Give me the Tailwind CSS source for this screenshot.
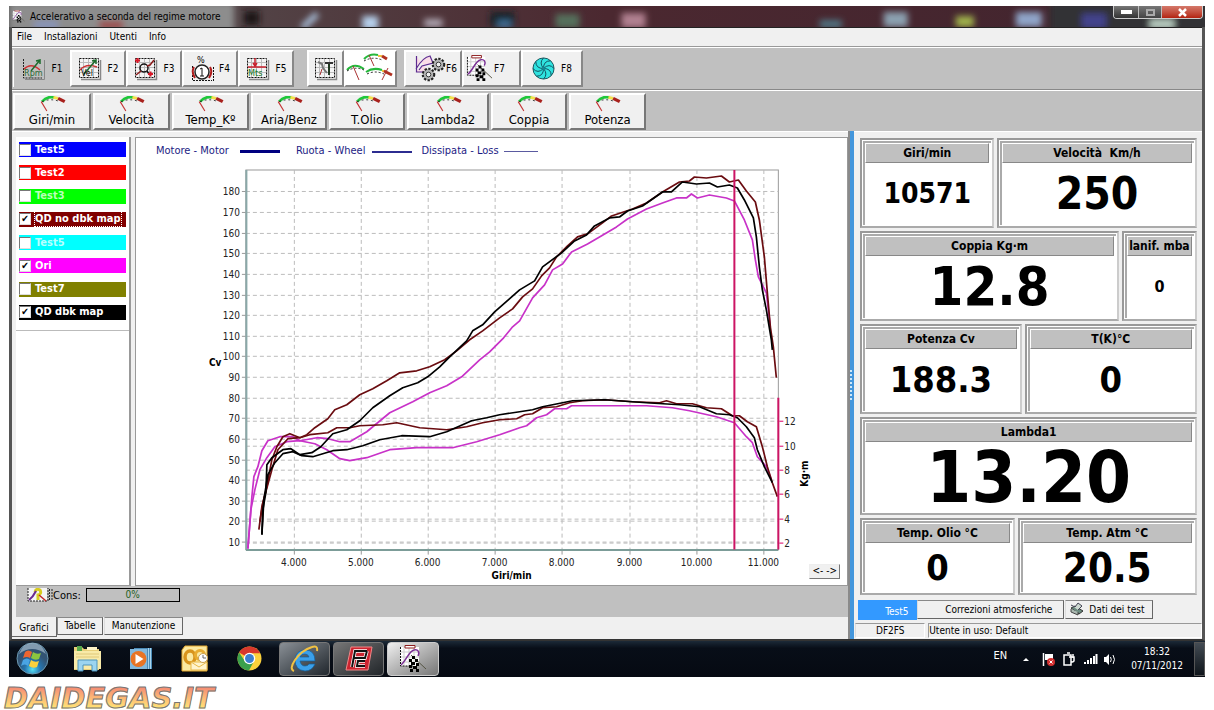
<!DOCTYPE html>
<html lang="it">
<head>
    <meta charset="UTF-8">
    <meta name="viewport" content="width=device-width, initial-scale=1.0">
    <title>Accelerativo a seconda del regime motore</title>
    <script src="https://cdn.jsdelivr.net/npm/@tailwindcss/browser@4"></script>
</head>
<body class="bg-white text-black text-[11px] font-['DejaVu_Sans_Condensed','DejaVu_Sans',sans-serif]">

    <!-- Simboli condivisi -->
    <svg class="hidden" aria-hidden="true">
        <symbol id="gauge" viewBox="0 0 28 17">
            <path d="M3 6 Q8 0 16 1.500" fill="none" stroke="#1fc83a" stroke-width="3"/>
            <path d="M15 1.500 L20 2.500" stroke="#f4e04a" stroke-width="3"/>
            <path d="M20 2.500 L27 6" stroke="#a8201c" stroke-width="3.500"/>
            <path d="M3 6 Q12 2 22 6" fill="none" stroke="#222" stroke-width="1" stroke-dasharray="2 3"/>
            <path d="M2 6 L8 16" stroke="#c43434" stroke-width="1.200"/>
        </symbol>
        <symbol id="grid" viewBox="0 0 24 24">
            <rect x="1" y="1" width="20" height="20" fill="#f4f4f4"/>
            <path d="M5.500 1V21M10.500 1V21M15.500 1V21M1 5.500H21M1 10.500H21M1 15.500H21" stroke="#bbb" stroke-width="1"/>
            <rect x="1.500" y="1.500" width="19" height="19" fill="none" stroke="#111" stroke-dasharray="2 1"/>
            <path d="M22.500 3V22.500H3" fill="none" stroke="#888" stroke-width="1.500"/>
        </symbol>
        <symbol id="chequer" viewBox="0 0 28 28">
            <rect x="1" y="2" width="19" height="19" fill="#fff"/>
            <path d="M5 2V21M10 2V21M15 2V21M1 7H20M1 12H20M1 17H20" stroke="#ccc"/>
            <path d="M1.500 2V21H14" fill="none" stroke="#111" stroke-dasharray="2 1"/>
            <path d="M6 .5H16V3H6Z" fill="#fff" stroke="#8c1c1c"/>
            <path d="M2 20C7 16 10 6 15 5C19 4 21 7 19 11" fill="none" stroke="#7a2f95" stroke-width="1.500"/>
            <path d="M12 10L27 24" stroke="#554" stroke-width="1"/>
            <path d="M13 11h3v3h-3zM10 14h3v3h-3zM16 14h3v3h-3zM12 17h4v3h-4zM17 18h3v3h-3zM10 20h3v3h-3zM14 21h4v3h-4zM11 24h3v3h-3zM17 24h3v3h-3z" fill="#000"/>
        </symbol>
        <symbol id="gear" viewBox="0 0 16 16">
            <circle cx="8" cy="8" r="6" fill="#aaa" stroke="#222" stroke-width="2.500" stroke-dasharray="2.400 1.500"/>
            <circle cx="8" cy="8" r="5" fill="#b4b4b4"/>
            <circle cx="8" cy="8" r="2.500" fill="#eee" stroke="#333"/>
        </symbol>
    </svg>

    <div class="mx-[9px] mt-[6px]">

        <!-- Barra del titolo -->
        <header class="relative flex h-[21px] items-center overflow-hidden bg-linear-to-r from-[#555] via-[#4b2830] to-[#41242e]">
            <svg class="absolute inset-0 h-full w-full" viewBox="0 0 1195 21" preserveAspectRatio="none" aria-hidden="true">
                <defs><filter id="soft"><feGaussianBlur stdDeviation="3"/></filter></defs>
                <g filter="url(#soft)">
                    <rect x="0" y="-4" width="225" height="30" fill="#8d8d8d"/>
                    <rect x="25" y="15" width="24" height="8" fill="#8894ba"/>
                    <rect x="90" y="15" width="24" height="8" fill="#9c4444"/>
                    <rect x="235" y="5" width="15" height="14" fill="#1c1218"/>
                    <path d="M293 22L308 8" stroke="#a8bfda" stroke-width="6"/>
                    <rect x="353" y="10" width="16" height="14" fill="#b6d0ec"/>
                    <rect x="415" y="13" width="18" height="8" fill="#b0a8b4"/>
                    <rect x="481" y="6" width="24" height="15" fill="#152228"/>
                    <rect x="488" y="14" width="14" height="8" fill="#3c6c92"/>
                    <rect x="546" y="8" width="24" height="14" fill="#54705c"/>
                    <rect x="612" y="7" width="24" height="15" fill="#b08090"/>
                    <rect x="810" y="14" width="22" height="8" fill="#507684"/>
                    <rect x="874" y="6" width="24" height="15" fill="#8ba0b0"/>
                    <rect x="946" y="10" width="18" height="11" fill="#a0b34c"/>
                    <rect x="1006" y="6" width="26" height="15" fill="#8fa4c8"/>
                    <rect x="1040" y="-4" width="160" height="30" fill="#333036"/>
                    <rect x="1072" y="8" width="24" height="14" fill="#42428c"/>
                    <rect x="1140" y="14" width="24" height="8" fill="#c0d4c8"/>
                </g>
            </svg>
            <svg class="relative ml-[3px] size-[13px]" aria-hidden="true"><use href="#chequer"/></svg>
            <h1 class="relative ml-[5px] text-[10px] leading-4">Accelerativo a seconda del regime motore</h1>
            <div class="relative mr-[2px] ml-auto flex h-[13px] self-start overflow-hidden rounded-b border border-t-0 border-[#ccc]">
                <button aria-label="Riduci" class="flex w-[25px] items-center justify-center border-r border-[#bbb] bg-linear-to-b from-[#777] to-[#333]"><span class="h-[4px] w-[11px] bg-white"></span></button>
                <button aria-label="Ingrandisci" class="flex w-[23px] items-center justify-center border-r border-[#bbb] bg-linear-to-b from-[#777] to-[#444]"><span class="h-[7px] w-[9px] border-2 border-[#aaa]"></span></button>
                <button aria-label="Chiudi" class="flex w-[40px] items-center justify-center bg-linear-to-b from-[#d4786a] to-[#b3200d]">
                    <svg class="size-[9px]" viewBox="0 0 9 9"><path d="M1 1L8 8M8 1L1 8" stroke="#fff" stroke-width="2.500"/></svg>
                </button>
            </div>
        </header>

        <div class="border-x-[3px] border-b-2 border-x-[#555] border-b-[#333] bg-[#f0f0f0]">
            <!-- Menu -->
            <nav class="flex h-[20px] items-center gap-[12px] border-t border-b border-t-[#222] border-b-[#999] pb-[2px] pl-[5px] text-[10px]">
                <a href="#">File</a>
                <a href="#">Installazioni</a>
                <a href="#">Utenti</a>
                <a href="#">Info</a>
            </nav>

            <!-- Strumenti -->
            <div class="flex h-[43px] items-center border-t border-b border-t-white border-b-[#888] bg-[#c0c0c0] pl-px">
                <button class="flex h-[37px] w-[57px] items-center justify-center gap-[6px] border-l border-white text-[10px]">
                    <svg class="size-[24px]" viewBox="0 0 24 24"><path d="M1.500 2V21H20" fill="none" stroke="#222" stroke-dasharray="2 1"/><path d="M2 12Q9 5 18 13" fill="none" stroke="#c33" stroke-width="1.500"/><path d="M9 14L18 3M14 4L18 3V7" fill="none" stroke="#1c6c2c" stroke-width="1.500"/><text x="2" y="19" font-size="9" fill="#2a6a35">Rpm</text><path d="M22.500 3V22.500H3" fill="none" stroke="#888"/></svg>F1
                </button>
                <button class="flex h-[37px] w-[56px] items-center justify-center gap-[6px] border-2 border-t-white border-r-[#888] border-b-[#888] border-l-white bg-[#f0f0f0] text-[10px]">
                    <svg class="size-[24px]" viewBox="0 0 24 24"><use href="#grid"/><path d="M2 13Q8 6 19 10" fill="none" stroke="#c33" stroke-width="1.500"/><path d="M6 17L18 3M14 4L18 3V7" fill="none" stroke="#1c6c2c" stroke-width="1.500"/><text x="3" y="19" font-size="9">Vel</text></svg>F2
                </button>
                <button class="flex h-[37px] w-[56px] items-center justify-center gap-[6px] border-2 border-t-white border-r-[#888] border-b-[#888] border-l-white bg-[#f0f0f0] text-[10px]">
                    <svg class="size-[24px]" viewBox="0 0 24 24"><use href="#grid"/><circle cx="10" cy="11" r="4" fill="none" stroke="#111" stroke-width="1.500"/><path d="M13 14L15 17" stroke="#111" stroke-width="1.500"/><path d="M2 18L7 14M13 9L16 8L20 3" fill="none" stroke="#8c1c1c" stroke-width="1.500"/><path d="M1 3.500H6M3.500 1V6M14 17H19M16.500 14.500V19.500" stroke="#d81828" stroke-width="2"/></svg>F3
                </button>
                <button class="flex h-[37px] w-[56px] items-center justify-center gap-[4px] border-2 border-t-white border-r-[#888] border-b-[#888] border-l-white bg-[#f0f0f0] text-[10px]">
                    <svg class="h-[29px] w-[25px]" viewBox="0 0 25 29"><text x="7" y="9" font-size="9">%</text><path d="M2.500 12V26.500H22M23.500 13V27" fill="none" stroke="#111" stroke-dasharray="2 1"/><circle cx="12" cy="18" r="7" fill="#fff" stroke="#222" stroke-width="1.500"/><path d="M4 13Q1 18 5 24M20 13Q23 18 19 24" fill="none" stroke="#b01c1c" stroke-width="2"/><path d="M12 14V22M10 15L12 14M10 22H14" fill="none" stroke="#111"/></svg>F4
                </button>
                <button class="flex h-[37px] w-[56px] items-center justify-center gap-[6px] border-2 border-t-white border-r-[#888] border-b-[#888] border-l-white bg-[#f0f0f0] text-[10px]">
                    <svg class="size-[24px]" viewBox="0 0 24 24"><use href="#grid"/><path d="M2 10H20M9 1V9M7 6L9 9L11 6" fill="none" stroke="#c8202c" stroke-width="1.500"/><text x="2" y="19" font-size="9" fill="#157a28">Mts</text></svg>F5
                </button>
                <button aria-label="Impostazioni" class="ml-[13px] flex h-[37px] w-[37px] items-center justify-center border-2 border-t-white border-r-[#888] border-b-[#888] border-l-white bg-[#f0f0f0]">
                    <svg class="size-[24px]" viewBox="0 0 24 24"><use href="#grid"/><path d="M15 6V18" stroke="#223a22" stroke-width="2"/><path d="M11 5H19V7H11Z" fill="#333"/><path d="M4 5L8 7L9 11L13 16" fill="none" stroke="#777" stroke-width="2"/><path d="M8 12L6 18" stroke="#a33"/></svg>
                </button>
                <button aria-label="Strumenti" class="h-[37px] w-[53px] border-2 border-t-white border-r-[#888] border-b-[#888] border-l-white bg-white">
                    <svg class="h-[33px] w-[49px]" viewBox="0 0 49 33" aria-hidden="true">
                        <g fill="none" stroke-width="2"><path d="M18 7Q24 1 32 3M1 18Q8 10 18 17M20 20Q27 15 36 18" stroke="#26b83c"/><path d="M32 4H36M36 19H39" stroke="#f0c040"/><path d="M36 4L41 7M38 19L46 23" stroke="#b03020" stroke-width="3"/><path d="M18 9Q27 4 36 8M1 19Q9 14 18 18M21 22Q29 18 38 22" stroke="#222" stroke-width="1" stroke-dasharray="2 2"/><path d="M23 3L28 14M7 14L13 28M42 16L36 28" stroke="#a33" stroke-width="1"/></g>
                    </svg>
                </button>
                <button class="ml-[7px] flex h-[37px] w-[58px] items-center justify-end border-2 border-t-white border-r-[#888] border-b-[#888] border-l-white bg-[#f0f0f0] pr-[3px] text-[10px]">
                    <svg class="h-[28px] w-[31px]" viewBox="0 0 31 28"><path d="M1.500 1V17H14M1 14Q8 2 15 1L18 8L7 11L4 15" fill="#fbdde8" stroke="#5c2c90" stroke-width="1.200"/><use href="#gear" x="16" y="2" width="15" height="15"/><use href="#gear" x="6" y="12" width="15" height="15"/></svg>F6
                </button>
                <button class="flex h-[37px] w-[59px] items-center gap-px border-2 border-t-white border-r-[#888] border-b-[#888] border-l-white bg-[#f0f0f0] pl-[2px] text-[10px]">
                    <svg class="size-[27px]" aria-hidden="true"><use href="#chequer"/></svg>F7
                </button>
                <button class="flex h-[37px] w-[62px] items-center justify-center gap-[6px] border-2 border-t-white border-r-[#888] border-b-[#888] border-l-white bg-[#f0f0f0] text-[10px]">
                    <svg class="size-[23px]" viewBox="0 0 24 24"><circle cx="12" cy="12" r="11" fill="#2fe3e0" stroke="#145058"/><g fill="none" stroke="#124c5c" stroke-width="1"><path d="M12 12Q7 6 12 1M12 12Q12 4 19 4M12 12Q18 6 23 12M12 12Q20 12 20 19M12 12Q17 18 12 23M12 12Q12 20 5 20M12 12Q6 18 1 12M12 12Q4 12 4 5"/></g><circle cx="12" cy="12" r="1.500" fill="#138a98"/></svg>F8
                </button>
            </div>

            <!-- Canali -->
            <div id="canali" class="flex h-[41px] items-center gap-[2px] border-t border-white bg-[#c0c0c0] pl-px text-[13px]"></div>

            <main class="grid grid-cols-[837fr_6px_348fr]">
                <section class="flex flex-col border-t border-white">
                    <div class="ml-[4px] grid grow grid-cols-[115px_1fr] gap-[4px] pt-[5px]">
                        <!-- Elenco prove -->
                        <div class="border-r-2 border-b border-r-[#999] border-b-[#999] bg-white">
                            <div id="prove" class="flex h-[194px] flex-col justify-between border-b border-[#bbb] px-[3px] pt-[5px] pb-[10px]"></div>
                        </div>
                        <!-- Grafico -->
                        <div class="relative border border-[#999] bg-white">
                            <div class="flex h-[27px] items-center pl-[20px] text-[11px] text-[#1c1c84]">
                                <span>Motore - Motor</span><span class="mr-[16px] ml-[11px] h-[3px] w-[40px] bg-[#000080]"></span>
                                <span>Ruota - Wheel</span><span class="mr-[9px] ml-[7px] h-[2px] w-[40px] bg-[#2c2c90]"></span>
                                <span>Dissipata - Loss</span><span class="ml-[5px] h-px w-[34px] bg-[#5a5aa0]"></span>
                            </div>
                            <svg id="grafico" class="block w-full" viewBox="136 165 712 420" font-size="10">
                                <rect x="246" y="170" width="533" height="380" fill="#fff" stroke="#999"/>
                                <g id="griglia" stroke="#bcbcbc" stroke-dasharray="4 3"></g>
                                <g id="assi" fill="#222"></g>
                                <path d="M246.500 170V550.500" stroke="#8aa8a8" stroke-width="2"/>
                                <path d="M246 550.500H779" stroke="#7c9c98" stroke-width="2"/>
                                <g fill="none" stroke-width="1.700" stroke-linejoin="round">
                                    <g stroke="#c832c8">
                                        <polyline points="248,549 252,497 254,477 258,467 262,451 268,441 280,437 293,437 300,441 317,438 328,439 340,442 350,442 367,432 390,413 413,402 430,393 447,386 462,377 480,360 490,352 504,338 513,327 520,321 533,298 545,285 553,270 563,264 572,252 588,244 600,237 617,227 628,219 647,209 663,203 677,198 687,198 692,194 698,198 710,195 727,198 735,201 745,220 753,240 756,260 759,277 767,293 771,327"/>
                                        <polyline points="248,549 251,510 255,490 260,470 267,458 275,447 287,442 300,441 315,444 327,450 340,459 350,461 367,458 390,450 417,448 453,448 477,442 500,435 520,428 527,426 537,418 547,415 555,409 567,409 572,406 647,406 673,408 690,411 717,417 735,423 747,437 753,443 758,457 767,467 772,480"/>
                                    </g>
                                    <g stroke="#6a0c10">
                                        <polyline points="259,530 262,507 267,487 272,460 277,447 283,437 290,434 300,438 307,435 315,428 328,419 335,410 347,405 360,395 373,389 387,381 400,373 417,371 430,367 445,360 457,351 470,340 483,331 500,318 513,309 523,297 533,289 542,276 550,268 557,257 568,246 578,237 588,234 603,223 612,216 618,214 633,209 647,203 663,192 680,182 690,181 695,177 707,178 722,176 730,182 739,180 747,191 756,202 760,220 765,257 768,293 771,327 774,347 777,378"/>
                                        <polyline points="260,522 263,503 272,470 278,450 288,439 300,438 310,435 328,433 337,428 350,428 360,426 383,425 397,423 420,428 447,430 467,427 483,423 500,420 517,419 525,415 533,414 543,408 557,407 570,403 583,401 605,400 633,402 660,403 667,401 677,404 693,404 707,408 722,409 733,416 740,416 748,422 757,427 763,447 768,467 773,483 778,497"/>
                                    </g>
                                    <g stroke="#000">
                                        <polyline points="262,535 263,510 266,493 267,465 272,458 283,450 291,449 300,455 312,453 321,447 333,434 347,430 360,421 373,408 390,396 403,388 418,383 428,377 440,367 450,357 467,341 473,331 483,325 495,312 520,290 535,281 543,267 562,253 575,241 587,235 595,226 610,218 620,217 628,211 643,206 663,192 672,192 683,182 697,184 710,183 718,187 730,185 738,188 745,200 754,218 757,237 760,267 763,290 767,310 772,340 773,350"/>
                                        <polyline points="262,535 264,500 268,475 275,463 283,454 293,452 302,456 313,457 333,451 347,450 363,446 380,440 402,436 430,437 447,432 472,421 487,418 500,415 520,412 533,410 543,407 573,401 605,400 647,403 680,405 700,407 717,414 730,415 738,418 747,427 755,438 758,450 765,467 773,483"/>
                                    </g>
                                </g>
                                <path d="M735 170V550M779 398V550" stroke="#cc1464" stroke-width="2"/>
                                <g font-weight="bold">
                                    <text x="209" y="366">Cv</text>
                                    <text x="512" y="579" text-anchor="middle">Giri/min</text>
                                    <text transform="translate(809 474) rotate(-90)" text-anchor="middle">Kg·m</text>
                                </g>
                            </svg>
                            <button class="absolute right-[7px] bottom-[6px] h-[15px] w-[31px] border border-t-[#eee] border-r-[#777] border-b-[#777] border-l-[#eee] bg-[#f0f0f0] text-[10px] leading-[12px] whitespace-nowrap">&lt;- -&gt;</button>
                        </div>
                    </div>
                    <div class="ml-[4px] flex h-[31px] items-start bg-[#c0c0c0] pt-[2px] pl-[10px] text-[11px]">
                        <svg class="h-[14px] w-[27px]" viewBox="0 0 27 14" aria-hidden="true"><rect x="2" width="19" height="13" fill="#f4f4f4"/><path d="M2 0V13H22V0M23.500 1V13M26 1V13" fill="none" stroke="#222" stroke-dasharray="2 1"/><path d="M9 4Q10 0 14 2Q16 6 12 7V12" fill="none" stroke="#d8cc20" stroke-width="3"/><path d="M3 12Q7 9 10 3" fill="none" stroke="#6a2890" stroke-width="2"/><path d="M13 7L20 13" stroke="#c02828" stroke-width="1.500"/></svg>
                        <span>Cons:</span>
                        <div role="progressbar" aria-valuenow="0" class="ml-[5px] h-[14px] w-[94px] border border-black text-center text-[10px] leading-3 text-[#226022]">0%</div>
                    </div>
                    <div class="flex items-start pb-[2px] text-[10px]">
                        <button class="h-[20px] w-[45px] border-r border-b border-[#666] pt-[3px]">Grafici</button>
                        <button class="h-[18px] w-[46px] border border-t-[#888] border-r-[#666] border-b-[#666] border-l-[#888]">Tabelle</button>
                        <button class="ml-px h-[18px] w-[79px] border border-t-[#888] border-r-[#666] border-b-[#666] border-l-[#ddd]">Manutenzione</button>
                    </div>
                </section>

                <!-- Divisore -->
                <div class="flex items-center border-l-2 border-[#8a8a8a] bg-[#4396dc]">
                    <span class="h-[30px] w-full border-l-2 border-dotted border-[#d0e8f8]"></span>
                </div>

                <!-- Valori istantanei -->
                <section class="flex flex-col border-t border-white pl-px">
                    <div id="valori" class="mx-[5px] mt-[6px] grid grow grid-rows-[90fr_90fr_90fr_98fr_76fr] gap-[3px]"></div>
                    <div class="mt-[5px] ml-[3px] flex h-[20px] items-start text-[10px]">
                        <button class="h-[20px] w-[59px] bg-[#3399ff] pt-[4px] pl-[18px] text-white">Test5</button>
                        <button class="h-[19px] w-[147px] border border-t-[#888] border-r-[#666] border-b-[#666] border-l-[#ddd] pl-[16px]">Correzioni atmosferiche</button>
                        <button class="ml-px flex h-[19px] w-[88px] items-center gap-[5px] border border-t-[#888] border-r-[#666] border-b-[#666] border-l-[#ddd] pl-[4px] whitespace-nowrap">
                            <svg class="size-[14px] shrink-0" viewBox="0 0 14 14"><path d="M1 6L5 4L13 9L9 12Z" fill="#6c8c80" stroke="#333"/><path d="M1 3L5 5L8 1L12 4L8 8" fill="#ccd8d0" stroke="#445"/><path d="M1 7V10L8 13V10" fill="#aab8b0" stroke="#444"/></svg>Dati dei test
                        </button>
                    </div>
                    <div class="mt-[3px] mb-px flex h-[15px] gap-[3px] text-[10px] leading-[14px]">
                        <div class="w-[70px] border border-t-[#999] border-r-white border-b-white border-l-[#ddd] text-center">DF2FS</div>
                        <div class="grow border border-t-[#999] border-r-white border-b-white border-l-[#999]">Utente in uso: Default</div>
                    </div>
                </section>
            </main>
        </div>

        <!-- Barra delle applicazioni -->
        <footer class="flex h-[36px] items-center bg-linear-to-b from-[#1c2a38] via-[#080e18] via-20% to-[#060a12] text-[10px] text-white">
            <button aria-label="Start" class="ml-[7px]">
                <svg class="size-[33px]" viewBox="0 0 33 33"><defs><radialGradient id="orb" cy=".85"><stop offset="0" stop-color="#58e0f4"/><stop offset=".5" stop-color="#2575b0"/><stop offset="1" stop-color="#335474"/></radialGradient></defs><circle cx="16.500" cy="16.500" r="15.500" fill="url(#orb)" stroke="#6c98b0"/><path d="M3 12Q16 2 30 12Q26 1 16 1Q7 1 3 12" fill="#b8ccd8" opacity=".6"/><path d="M9 10Q12 7 16 10L14 16Q11 14 7 16Z" fill="#ee6530"/><path d="M17 10Q21 13 25 11L23 17Q19 19 15 16Z" fill="#8cc63e"/><path d="M7 18Q11 15 14 18L12 24Q9 21 5 24Z" fill="#4aa4e4"/><path d="M15 18Q19 21 23 19L21 25Q17 27 13 24Z" fill="#fcd03c"/></svg>
            </button>
            <button aria-label="Esplora risorse" class="ml-[24px]">
                <svg class="h-[27px] w-[29px]" viewBox="0 0 29 27"><path d="M1 2H9L11 4H26V25H1Z" fill="#e8cf78"/><path d="M4 1H9V6H4Z" fill="#57a84c"/><path d="M14 2H24V5H14Z" fill="#fff4c8"/><path d="M1 6H28V24H1Z" fill="#f8eaa8"/><path d="M3 9H26M3 12H26" stroke="#e0c878"/><path d="M5 26V15H24V26H19V20H10V26Z" fill="#9bd4f0" stroke="#4c94bc"/></svg>
            </button>
            <button aria-label="Media Player" class="ml-[27px]">
                <svg class="h-[23px] w-[24px]" viewBox="0 0 24 23"><path d="M5 1H23V22H5Z" fill="#4c8cb8"/><path d="M19.500 1V22M21.500 1V22" stroke="#a8d4ec"/><path d="M1 2H18V22H1Z" fill="#82b8dc"/><circle cx="9.500" cy="12" r="8" fill="#e87424"/><path d="M6.500 7L14.500 12L6.500 17Z" fill="#fff"/></svg>
            </button>
            <button aria-label="Outlook" class="ml-[28px]">
                <svg class="size-[27px]" viewBox="0 0 27 27"><path d="M4 1H26V26H1V5Z" fill="#fbe9a0" stroke="#e4a82c"/><ellipse cx="9" cy="12" rx="5" ry="6" fill="none" stroke="#d8941c" stroke-width="3.500"/><circle cx="19" cy="10" r="4.500" fill="none" stroke="#e8ac30" stroke-width="3"/><path d="M10 17H26V25H10Z" fill="#fff4cc" stroke="#e8b848"/><path d="M10 17L18 22L26 17" fill="none" stroke="#e8b848"/><circle cx="22" cy="13" r="4.500" fill="#fff" stroke="#c8a050"/><path d="M22 10V13H25" fill="none" stroke="#666"/></svg>
            </button>
            <button aria-label="Chrome" class="ml-[29px]">
                <svg class="size-[25px]" viewBox="0 0 24 24"><circle cx="12" cy="12" r="11.500" fill="#fbd13c"/><path d="M12 12L2 6.200A11.500 11.500 0 0 1 22 6.200L22 7H12Z" fill="#d8382c"/><path d="M2 6.200A11.500 11.500 0 0 0 11.500 23.500L16 15L7.500 14.500Z" fill="#3ba04c"/><circle cx="12" cy="12" r="5.500" fill="#fff"/><circle cx="12" cy="12" r="4.300" fill="#3c80d0"/></svg>
            </button>
            <button aria-label="Internet Explorer" class="ml-[17px] flex h-[34px] w-[51px] items-center justify-center rounded-sm border border-[#777] bg-linear-to-br from-[#8a9096] to-[#22282e]">
                <svg class="h-[28px] w-[29px]" viewBox="0 0 29 28"><path d="M22 16H10Q11 21 15 21Q18 21 19 19H25Q22 26 15 26Q5 25 5 15Q6 5 15 5Q25 5 25 16ZM10 12H19Q18 9 15 9Q11 9 10 12Z" fill="#3ba0ea" stroke="#12609c" stroke-width=".7"/><path d="M4 26Q-1 24 5 15Q12 5 22 2Q28 0 27 6" fill="none" stroke="#f2c242" stroke-width="2"/></svg>
            </button>
            <button aria-label="Editor" class="ml-[3px] flex h-[34px] w-[51px] items-center justify-center rounded-sm border border-[#777] bg-linear-to-br from-[#777] to-[#22262a]">
                <svg class="size-[28px]" viewBox="0 0 28 28"><path d="M6 2H27L23 25H1Z" fill="#cc2430" stroke="#f08888"/><path d="M22 6H10L7 22M9 13H20L22 6M20 21H12L13 16H20" fill="none" stroke="#fff" stroke-width="3.500"/><path d="M22 6H10L7 22M9 13H20L22 6M20 21H12L13 16H20" fill="none" stroke="#111" stroke-width="2"/></svg>
            </button>
            <button aria-label="Accelerativo" class="ml-[3px] flex h-[34px] w-[52px] items-center justify-center rounded-sm border border-[#ccc] bg-linear-to-br from-[#f0f0f0] to-[#777]">
                <svg class="size-[28px]" aria-hidden="true"><use href="#chequer"/></svg>
            </button>
            <span class="mr-[16px] ml-auto pb-[4px] text-[11px]">EN</span>
            <svg class="h-[16px] w-[94px]" viewBox="0 0 94 16" aria-hidden="true">
                <path d="M0 10L3 7L6 10Z" fill="#fff"/>
                <path d="M20.500 2V15" stroke="#fff" stroke-width="1.500"/><path d="M22 3H30V9H22Z" fill="#fff"/><circle cx="28" cy="11" r="4" fill="#d43030"/><path d="M26.500 9.500L29.500 12.500M29.500 9.500L26.500 12.500" stroke="#fff"/>
                <path d="M41 4H48V14H41ZM44 2H47M50 3V7M46 6H51V10Q49 12 48 10V14" fill="none" stroke="#fff" stroke-width="1.500"/>
                <path d="M62 13V11M65 13V9M68 13V7M71 13V5M73.500 13V3" stroke="#fff" stroke-width="2"/>
                <path d="M81 6H83L86 3V14L83 11H81Z" fill="#fff"/><path d="M87.500 6Q89 8.500 87.500 11M90 4Q93 8.500 90 13" fill="none" stroke="#fff"/>
            </svg>
            <time datetime="2012-11-07T18:32" class="mr-[11px] ml-[14px] text-center leading-[14px]">18:32<br>07/11/2012</time>
            <button aria-label="Mostra desktop" class="h-[34px] w-[11px] border border-[#555] bg-linear-to-b from-[#444c54] to-[#10161c]"></button>
        </footer>
    </div>

    <a href="#" class="mt-[10px] ml-[4px] block w-fit bg-linear-to-b from-[#f48a74] to-[#ffe874] bg-clip-text pr-2 font-['DejaVu_Sans',sans-serif] text-[29px] leading-[22px] font-bold text-transparent italic [-webkit-text-stroke:1px_#777]">DAIDEGAS.IT</a>

    <script>
        // Canali
        const canali = [
            ["Giri/min", "w-[78px]"], ["Velocità", "w-[77px]"], ["Temp_Kº", "w-[77px]"], ["Aria/Benz", "w-[76px]"],
            ["T.Olio", "w-[76px]"], ["Lambda2", "w-[82px]"], ["Coppia", "w-[76px]"], ["Potenza", "w-[77px]"]
        ];
        document.getElementById("canali").innerHTML = canali.map(([nome, w]) => `
            <button class="${w} flex h-[37px] flex-col items-center justify-end border-2 border-t-white border-r-[#777] border-b-[#777] border-l-white bg-[#f0f0f0]">
                <svg class="h-[16px] w-[27px] shrink-0" aria-hidden="true"><use href="#gauge"/></svg>
                <span class="leading-[16px]">${nome}</span>
            </button>`).join("");

        // Prove
        const prove = [
            ["Test5", "bg-[#0000ff]", 0], ["Test2", "bg-[#ff0000]", 0], ["Test3", "bg-[#00ff00] text-[#b8ffb8]", 0],
            ["QD no dbk map", "bg-[#800000]", 1], ["Test5", "bg-[#00ffff] text-[#b8ffff]", 0], ["Ori", "bg-[#ff00ff]", 1],
            ["Test7", "bg-[#808000]", 0], ["QD dbk map", "bg-black", 1]
        ];
        document.getElementById("prove").innerHTML = prove.map(([nome, cls, on], i) => `
            <label class="${cls} ${cls.includes("text-") ? "" : "text-white"} flex h-[15px] items-center text-[11px] leading-[14px] font-bold whitespace-nowrap">
                <input type="checkbox" ${on ? "checked" : ""} class="mr-[4px] size-[12px] shrink-0 appearance-none border border-t-[#777] border-r-[#ddd] border-b-[#ddd] border-l-[#777] bg-white text-[10px] leading-[10px] text-black checked:before:block checked:before:text-center checked:before:content-['✔']">
                <span class="${i == 3 ? "outline-1 outline-dotted outline-white" : ""}">${nome}</span>
            </label>`).join("");

        // Riquadri dei valori
        const righe = [
            ["grid-cols-[134fr_200fr]", ["Giri/min", "10571", "text-[28px]"], ["Velocità&nbsp; Km/h", "250", "text-[44px]"]],
            ["grid-cols-[258fr_75fr]", ["Coppia Kg·m", "12.8", "text-[54px]"], ["lanif. mba", "0", "text-[16px]"]],
            ["grid-cols-[160fr_171fr]", ["Potenza Cv", "188.3", "text-[36px]"], ["T(K)°C", "0", "text-[36px]"]],
            ["grid-cols-1", ["Lambda1", "13.20", "text-[72px]"]],
            ["grid-cols-[153fr_178fr]", ["Temp. Olio °C", "0", "text-[36px]"], ["Temp. Atm °C", "20.5", "text-[40px]"]]
        ];
        document.getElementById("valori").innerHTML = righe.map(([cols, ...box]) => `
            <div class="grid ${cols} gap-[3px]">${box.map(([t, v, size]) => `
                <div class="flex min-w-0 border-2 border-t-[#999] border-r-[#ccc] border-b-[#aaa] border-l-[#999] bg-white p-px">
                    <div class="flex min-w-0 grow flex-col border-t-2 border-l-2 border-[#aaa] pr-[2px]">
                        <h2 class="flex h-[20px] shrink-0 items-center justify-center overflow-hidden border border-t-white border-r-[#888] border-b-[#888] border-l-white bg-[#c0c0c0] text-[12px] leading-[16px] font-bold whitespace-nowrap">${t}</h2>
                        <output class="flex h-0 grow items-center justify-center ${size} leading-none font-bold">${v}</output>
                    </div>
                </div>`).join("")}
            </div>`).join("");

        // Griglia e assi del grafico
        let linee = "", testi = "";
        for (let cv = 10; cv <= 180; cv += 10) {
            const y = Math.round(562.6 - 2.062 * cv);
            linee += `<path d="M246 ${y}.5H779"/>`;
            testi += `<path d="M242 ${y}.5h4" stroke="#999"/><text x="240" y="${y + 4}" text-anchor="end">${cv}</text>`;
        }
        for (let k = 4; k <= 11; k++) {
            const x = Math.round(294 + (k - 4) * 67.1);
            linee += `<path d="M${x}.5 170V550"/>`;
            testi += `<path d="M${x}.5 551v4" stroke="#999"/><text x="${x}" y="566" text-anchor="middle">${k}.000</text>`;
        }
        for (let m = 2; m <= 12; m += 2) {
            const y = Math.round(567.3 - 12.15 * m);
            linee += `<path d="M246 ${y}.5H779"/>`;
            testi += `<path d="M780 ${y}.5h4" stroke="#d06"/><text x="785" y="${y + 4}">${m}</text>`;
        }
        document.getElementById("griglia").innerHTML = linee;
        document.getElementById("assi").innerHTML = testi;
    </script>
</body>
</html>
